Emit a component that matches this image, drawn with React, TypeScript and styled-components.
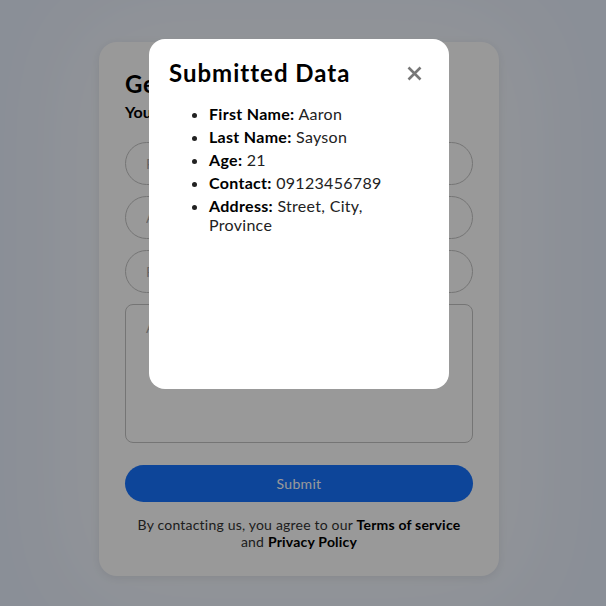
import React from 'react';
import styled, { createGlobalStyle } from 'styled-components';

const GlobalStyle = createGlobalStyle`
  * { box-sizing: border-box; }
  html, body {
    margin: 0;
    padding: 0;
    height: 100%;
  }
  body {
    background: #e6eefc;
    font-family: 'Lato', 'Noto Sans', sans-serif;
    color: #111;
  }
`;

const Page = styled.div`
  min-height: 606px;
  display: flex;
  justify-content: center;
  align-items: flex-start;
  padding: 42px 8px 0 0;
`;

const Card = styled.form`
  width: 400px;
  background: #fff;
  border-radius: 18px;
  padding: 26px 26px 26px;
  box-shadow: 0 2px 10px rgba(0, 0, 0, 0.08), 0 0 110px 30px rgba(255, 255, 255, 0.7);
  display: flex;
  flex-direction: column;
`;

const FormTitle = styled.h1`
  margin: 1px 0 0;
  font-size: 24px;
  line-height: 29px;
  font-weight: 700;
  letter-spacing: 0.8px;
  color: #000;
`;

const FormSubtitle = styled.h3`
  margin: 4px 0 21px;
  font-size: 16px;
  line-height: 19px;
  font-weight: 700;
  color: #000;
`;

const Fields = styled.div`
  display: flex;
  flex-direction: column;
  gap: 11px;
`;

const Input = styled.input`
  height: 43px;
  width: 100%;
  border: 1px solid #c4c4c4;
  border-radius: 999px;
  padding: 0 20px;
  font-family: inherit;
  font-size: 14px;
  background: transparent;
  &::placeholder { color: #a8a8a8; }
`;

const TextArea = styled.textarea`
  height: 139px;
  width: 100%;
  border: 1px solid #c4c4c4;
  border-radius: 8px;
  padding: 14px 20px;
  font-family: inherit;
  font-size: 14px;
  resize: none;
  background: transparent;
  &::placeholder { color: #a8a8a8; }
`;

const SubmitButton = styled.button`
  margin-top: 22px;
  height: 37px;
  width: 100%;
  border: none;
  border-radius: 999px;
  background: #1673ff;
  color: #fff;
  font-family: inherit;
  font-size: 14px;
  letter-spacing: 0.3px;
`;

const Agreement = styled.p`
  margin: 14px 0 0;
  padding: 0 10px;
  text-align: center;
  font-size: 14px;
  line-height: 17px;
  letter-spacing: 0.2px;
  color: #333;
  b { color: #000; font-weight: 700; }
`;

const Overlay = styled.div`
  position: fixed;
  inset: 0;
  background: rgba(0, 0, 0, 0.4);
  display: flex;
  justify-content: center;
  align-items: flex-start;
  padding: 39px 8px 0 0;
`;

const Modal = styled.div`
  width: 300px;
  height: 350px;
  background: #fff;
  border-radius: 16px;
  padding: 19px 20px 20px;
`;

const ModalHeader = styled.div`
  display: flex;
  justify-content: space-between;
  align-items: center;
`;

const ModalTitle = styled.h2`
  margin: 0;
  font-size: 24px;
  line-height: 29px;
  font-weight: 700;
  letter-spacing: 1px;
  color: #000;
`;

const CloseButton = styled.button`
  border: none;
  background: none;
  padding: 0;
  margin: 2px 7px 0 0;
  width: 16px;
  height: 16px;
  display: flex;
  align-items: center;
  justify-content: center;
  cursor: pointer;
`;

const DataList = styled.ul`
  margin: 17px 0 0;
  padding: 0 0 0 40px;
  width: 250px;
  list-style: disc;
`;

const DataItem = styled.li`
  font-size: 16px;
  line-height: 19px;
  margin-bottom: 4px;
  letter-spacing: 0.3px;
  color: #222;
  b { color: #000; font-weight: 700; }
`;

const data = [
  { label: 'First Name', value: 'Aaron' },
  { label: 'Last Name', value: 'Sayson' },
  { label: 'Age', value: '21' },
  { label: 'Contact', value: '09123456789' },
  { label: 'Address', value: 'Street, City, Province' },
];

export default function App() {
  return (
    <>
      <GlobalStyle />
      <Page>
        <Card onSubmit={(e) => e.preventDefault()}>
          <FormTitle>Get in touch</FormTitle>
          <FormSubtitle>You can reach us anytime</FormSubtitle>
          <Fields>
            <Input placeholder="First Name" />
            <Input placeholder="Age" />
            <Input placeholder="Phone Number" />
            <TextArea placeholder="Address" />
          </Fields>
          <SubmitButton type="submit">Submit</SubmitButton>
          <Agreement>
            By contacting us, you agree to our <b>Terms of service</b> and <b>Privacy Policy</b>
          </Agreement>
        </Card>
      </Page>
      <Overlay>
        <Modal>
          <ModalHeader>
            <ModalTitle>Submitted Data</ModalTitle>
            <CloseButton aria-label="Close">
              <svg width="15" height="15" viewBox="0 0 15 15">
                <path d="M1.5 1.5 L13.5 13.5 M13.5 1.5 L1.5 13.5" stroke="#777" strokeWidth="2.6" strokeLinecap="butt" />
              </svg>
            </CloseButton>
          </ModalHeader>
          <DataList>
            {data.map((d) => (
              <DataItem key={d.label}>
                <b>{d.label}:</b> {d.value}
              </DataItem>
            ))}
          </DataList>
        </Modal>
      </Overlay>
    </>
  );
}
